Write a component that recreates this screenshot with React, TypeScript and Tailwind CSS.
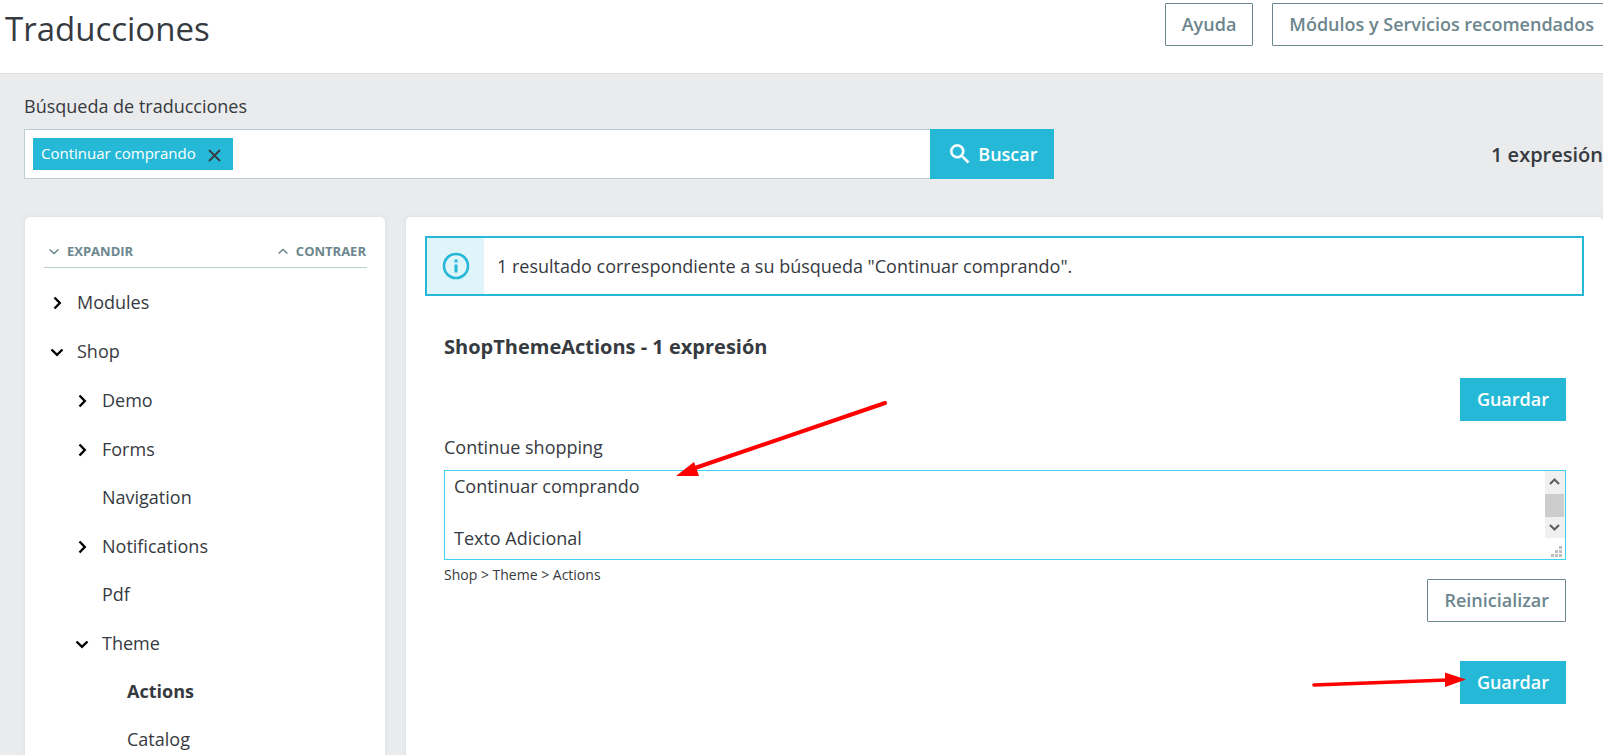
import React from "react";

type Node = { label: string; open?: boolean; toggle?: boolean; active?: boolean; children?: Node[] };

const tree: Node[] = [
  { label: "Modules", toggle: true },
  {
    label: "Shop",
    toggle: true,
    open: true,
    children: [
      { label: "Demo", toggle: true },
      { label: "Forms", toggle: true },
      { label: "Navigation" },
      { label: "Notifications", toggle: true },
      { label: "Pdf" },
      {
        label: "Theme",
        toggle: true,
        open: true,
        children: [{ label: "Actions", active: true }, { label: "Catalog" }],
      },
    ],
  },
];

function Chevron({ open }: { open?: boolean }) {
  return (
    <svg viewBox="0 0 16 16" className="size-4" fill="none" stroke="#000" strokeWidth="2.4" aria-hidden="true">
      {open ? <path d="M2.5 5.5 8 10.8l5.5-5.3" /> : <path d="M5.5 2.5 10.8 8l-5.3 5.5" />}
    </svg>
  );
}

function Tree({ nodes }: { nodes: Node[] }) {
  return (
    <ul>
      {nodes.map((n) => (
        <li key={n.label}>
          <div className={n.toggle ? "flex h-[49px] items-center" : "flex h-12 items-center"}>
            {n.toggle ? (
              <button type="button" aria-label={n.label} aria-expanded={!!n.open} className="mt-[2px] mr-3 size-4">
                <Chevron open={n.open} />
              </button>
            ) : (
              <span className="mr-3 size-4" />
            )}
            <a href="#" className={n.active ? "font-bold" : ""}>
              {n.label}
            </a>
          </div>
          {n.children && (
            <div className="pl-[25px]">
              <Tree nodes={n.children} />
            </div>
          )}
        </li>
      ))}
    </ul>
  );
}

const outline =
  "h-[43px] shrink-0 whitespace-nowrap rounded-[1px] border border-[#6c868e] bg-white px-4 pb-[2px] font-semibold text-[#6c868e]";
const primary = "h-[43px] bg-[#25b9d7] px-[17px] pb-px font-semibold text-white";

export default function App() {
  return (
    <div className="flex min-h-screen flex-col overflow-x-hidden bg-[#eaebec] font-['Open_Sans',sans-serif] text-[18px] leading-[26px] text-[#363a41]">
      <header className="flex h-[74px] items-start justify-between border-b border-[#dddddd] bg-white pl-[5px]">
        <h1 className="pt-1 text-[33px] leading-[50px]">Traducciones</h1>
        <div className="-mr-2 flex gap-[19px] pt-[3px]">
          <button type="button" className={outline}>Ayuda</button>
          <button type="button" className={outline}>Módulos y Servicios recomendados</button>
        </div>
      </header>

      <form className="flex items-end justify-between pt-[19px] pl-6" onSubmit={(e) => e.preventDefault()}>
        <div className="w-[65.2%]">
          <label htmlFor="search" className="block">Búsqueda de traducciones</label>
          <div className="mt-[10px] flex h-[50px]">
            <div className="flex min-w-0 flex-1 items-center border border-r-0 border-[#bbcdd2] bg-white pl-2">
              <span className="flex h-8 shrink-0 items-center bg-[#25b9d7] pr-3 pb-[2px] pl-2 text-[15px] text-white">
                Continuar comprando
                <button type="button" aria-label="Quitar" className="mt-1 ml-3">
                  <svg viewBox="0 0 13 13" className="size-[13px]" fill="none" stroke="#363a41" strokeWidth="1.8" aria-hidden="true">
                    <path d="m1 1 11 11M12 1 1 12" />
                  </svg>
                </button>
              </span>
              <input id="search" className="h-full min-w-0 flex-1 bg-transparent px-2 outline-none" />
            </div>
            <button type="submit" className="flex items-center gap-[5px] bg-[#25b9d7] pr-4 pl-[17px] font-semibold text-white">
              <svg viewBox="0 0 24 24" className="size-[26px]" fill="currentColor" stroke="currentColor" strokeWidth=".4" aria-hidden="true">
                <path d="M15.500 14h-.79l-.28-.27A6.470 6.470 0 0 0 16 9.500 6.500 6.500 0 1 0 9.500 16c1.610 0 3.090-.59 4.230-1.570l.27.28v.79l5 4.990L20.490 19l-4.990-5zm-6 0C7.010 14 5 11.990 5 9.500S7.010 5 9.500 5 14 7.010 14 9.500 11.990 14 9.500 14z" />
              </svg>
              Buscar
            </button>
          </div>
        </div>
        <p className="pb-[11px] text-[20px] font-semibold">1 expresión</p>
      </form>

      <div className="flex flex-1 gap-[21px] pt-[38px] pl-[25px]">
        <aside className="w-[360px] shrink-0 rounded-t-[5px] bg-white px-[19px] pt-[22px] shadow-[0_0_4px_#bbcdd266]">
          <div className="-mr-px flex h-[29px] items-start justify-between border-b border-[#bbcdd2] pr-px pl-[5px] text-[13px] leading-6 font-bold text-[#6c868e]">
            <button type="button" className="flex items-center gap-2">
              <svg viewBox="0 0 10 10" className="size-[10px]" fill="none" stroke="currentColor" strokeWidth="1.6" aria-hidden="true">
                <path d="m.6 3.500 4.400 4 4.400-4" />
              </svg>
              EXPANDIR
            </button>
            <button type="button" className="flex items-center gap-2">
              <svg viewBox="0 0 10 10" className="size-[10px]" fill="none" stroke="currentColor" strokeWidth="1.6" aria-hidden="true">
                <path d="m.6 7.500 4.400-4 4.400 4" />
              </svg>
              CONTRAER
            </button>
          </div>
          <nav className="pt-[9px] pl-[5px]">
            <Tree nodes={tree} />
          </nav>
        </aside>

        <main className="min-w-0 flex-1 rounded-t-[5px] bg-white px-[19px] pt-[19px] shadow-[0_0_4px_#bbcdd266]">
          <div role="status" className="flex h-[60px] items-center border-2 border-[#25b9d7]">
            <span className="flex h-full w-[57px] items-center justify-center bg-[#dff5f9]">
              <svg viewBox="0 0 28 28" className="size-7" fill="#25b9d7" aria-hidden="true">
                <circle cx="14" cy="14" r="12" fill="none" stroke="#25b9d7" strokeWidth="2.600" />
                <path d="M12.500 7.500h3v3h-3zM12.500 12.500h3v8h-3z" />
              </svg>
            </span>
            <p className="pl-[13px]">1 resultado correspondiente a su búsqueda "Continuar comprando".</p>
          </div>

          <form className="pt-[38px] pr-[18px] pl-[19px]" onSubmit={(e) => e.preventDefault()}>
            <h2 className="text-[20px] font-bold">ShopThemeActions - 1 expresión</h2>
            <div className="flex justify-end pt-[18px]">
              <button type="submit" className={primary}>Guardar</button>
            </div>
            <label htmlFor="translation" className="mt-[13px] block">Continue shopping</label>
            <div className="relative mt-[10px]">
              <textarea
                id="translation"
                defaultValue={"Continuar comprando\n\nTexto Adicional"}
                className="block h-[90px] w-full resize-none overflow-hidden border border-[#3ed2f0] bg-white py-[2px] pr-6 pl-[9px] outline-none"
              />
              <svg viewBox="0 0 20 88" className="absolute top-px right-px h-[88px] w-5" aria-hidden="true">
                <path fill="#f0f0f0" d="M0 0h20v67H0z" />
                <path fill="#cdcdcd" d="M0 23h19v23H0z" />
                <path fill="none" stroke="#606060" strokeWidth="2.200" d="m5 13 4.500-4.500L14 13M5 54l4.500 4.500L14 54" />
                <path fill="#bfbfbf" d="M14 75h3v3h-3zM10 79h3v3h-3zM14 79h3v3h-3zM6 83h3v3H6zM10 83h3v3h-3zM14 83h3v3h-3z" />
              </svg>
              <svg viewBox="0 0 214 80" className="absolute -top-[71px] left-[231px] h-20 w-[214px]" aria-hidden="true">
                <path stroke="#f00" strokeWidth="4" strokeLinecap="round" d="M210 4 20 69" />
                <path fill="#f00" d="M1 77 19 63l5 14z" />
              </svg>
            </div>
            <p className="pt-[5px] text-[14px] leading-5">Shop &gt; Theme &gt; Actions</p>
            <div className="-mt-[6px] flex justify-end">
              <button type="reset" className={outline}>Reinicializar</button>
            </div>
            <div className="flex justify-end pt-[39px]">
              <div className="relative">
                <button type="submit" className={primary}>Guardar</button>
                <svg viewBox="0 0 156 18" className="absolute top-[10px] -left-[149px] h-[18px] w-[156px]" aria-hidden="true">
                  <path stroke="#f00" strokeWidth="3.600" strokeLinecap="round" d="M3 14 136 9" />
                  <path fill="#f00" d="m134 1.500 21 7-21 7.500z" />
                </svg>
              </div>
            </div>
          </form>
        </main>
      </div>
    </div>
  );
}
